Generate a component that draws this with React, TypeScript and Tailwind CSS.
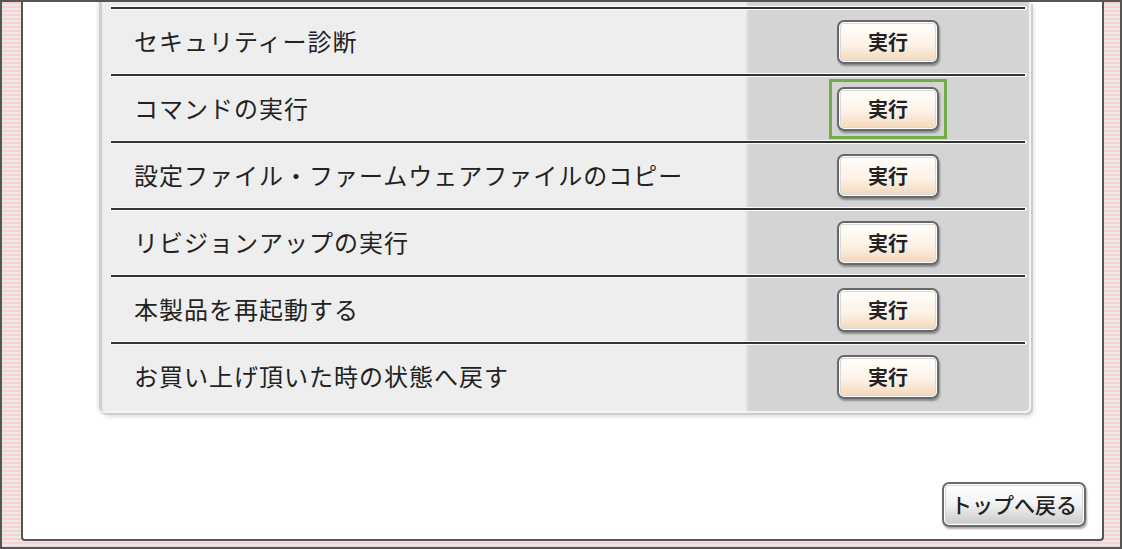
import React from "react";

const rows = [
  "セキュリティー診断",
  "コマンドの実行",
  "設定ファイル・ファームウェアファイルのコピー",
  "リビジョンアップの実行",
  "本製品を再起動する",
  "お買い上げ頂いた時の状態へ戻す",
];

function Sep() {
  return (
    <div className="pl-[7px] pr-[2px] py-[1px]">
      <div className="h-[4px] rounded-full bg-[#fafafa] flex items-center px-[2px]">
        <div className="h-[2px] w-full bg-[#333]" />
      </div>
    </div>
  );
}

function ExecButton({ highlight }: { highlight?: boolean }) {
  return (
    <div
      className={
        highlight
          ? "p-[5px] border-[3px] border-[#70ad47]"
          : "p-[5px] border-[3px] border-transparent"
      }
    >
      <button className="w-[102px] h-[44px] rounded-[7px] border-2 border-[#686868] bg-[linear-gradient(to_bottom,#fffefb_0%,#fdf3e8_55%,#f3d6b8_100%)] shadow-[inset_0_0_0_1px_#ffffff,inset_0_0_0_2px_#d8d8d8,1px_2px_2px_rgba(0,0,0,0.35)] text-[20px] font-bold text-[#222] flex items-center justify-center">
        実行
      </button>
    </div>
  );
}

export default function App() {
  return (
    <div
      className="w-[1122px] h-[549px] border-2 border-[#555] bg-[repeating-linear-gradient(to_bottom,#f6d2d2_0px,#f6d2d2_2px,#ebe8e8_2px,#ebe8e8_4px)] flex flex-col"
      style={{ fontFamily: '"Noto Sans CJK JP", "Noto Sans", sans-serif' }}
    >
      <div className="ml-[19px] mr-[16px] mb-[6px] flex-1 bg-white border-l-2 border-r-2 border-b-2 border-[#555] rounded-b-[4px] flex flex-col">
        <div className="ml-[76px] w-[932px] rounded-b-[6px] border-l-[3px] border-l-[#cfcfcf] border-r-[2px] border-r-[#f4f4f4] border-b-[2px] border-b-[#f4f4f4] shadow-[2px_2px_0_#cdcdcd,3px_4px_4px_rgba(0,0,0,0.12),-2px_0_3px_rgba(0,0,0,0.08)] bg-[linear-gradient(to_right,#eeeeee_644px,#e2e2e2_644px,#e2e2e2_646px,#d4d4d4_646px)] pt-[3px]">
          {rows.map((t, i) => (
            <div key={i}>
              <Sep />
              <div className="h-[61px] flex items-center">
                <div className="w-[645px] pl-[32px] pb-[2px] text-[24px] tracking-[1px] text-[#222] leading-none">
                  {t}
                </div>
                <div className="flex-1 flex justify-center">
                  <ExecButton highlight={i === 1} />
                </div>
              </div>
            </div>
          ))}
          <div className="h-[4px]" />
        </div>
        <div className="flex-1" />
        <div className="flex justify-end pr-[16px] pb-[12px]">
          <button className="w-[144px] h-[45px] rounded-[7px] border-2 border-[#6a6a6a] bg-[linear-gradient(to_bottom,#ffffff_0%,#f4f4f4_45%,#c9c9c9_100%)] shadow-[inset_0_0_0_1px_#ffffff,inset_0_0_0_2px_#d8d8d8,1px_2px_2px_rgba(0,0,0,0.35)] text-[21px] font-medium text-[#222] flex items-center justify-center">
            トップへ戻る
          </button>
        </div>
      </div>
    </div>
  );
}
